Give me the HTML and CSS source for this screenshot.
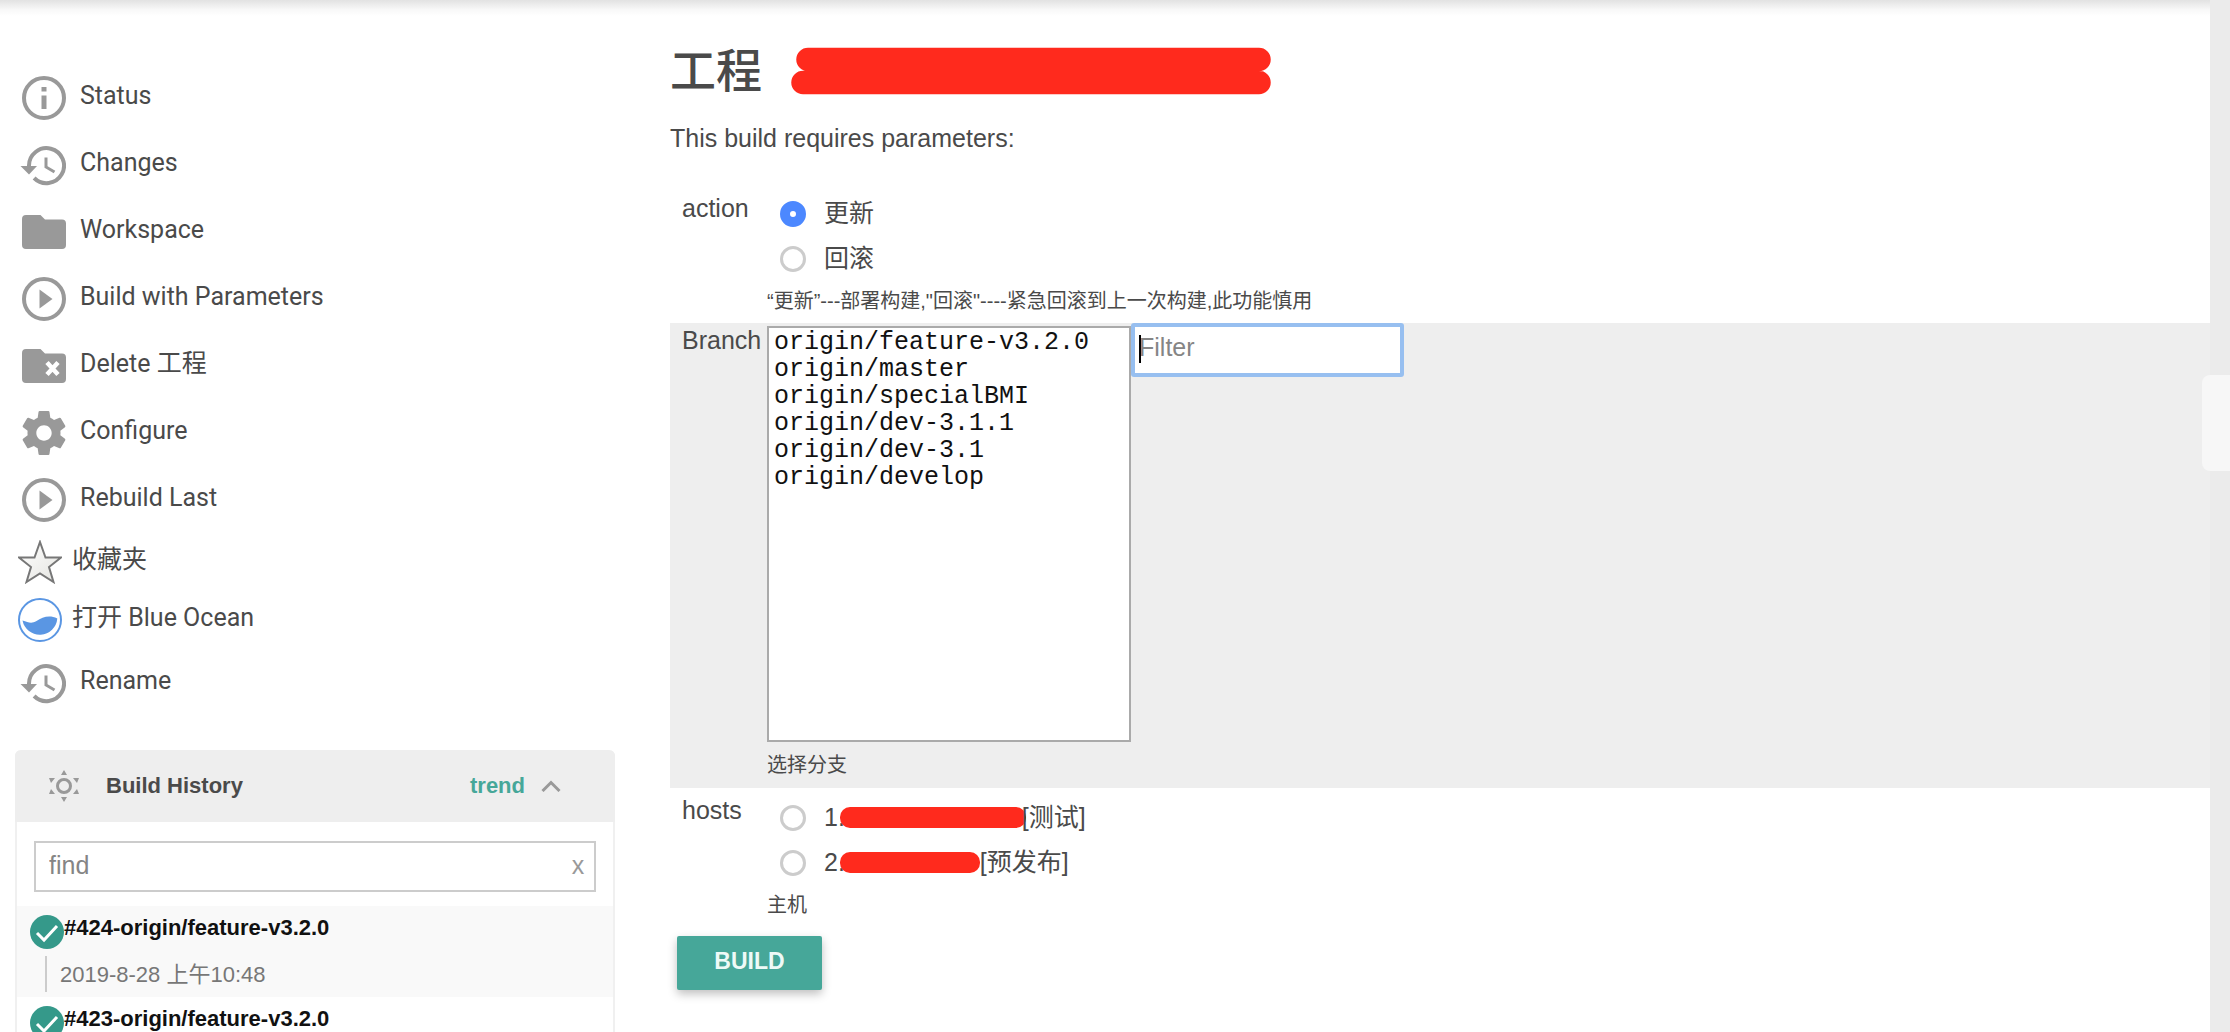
FILE: index.html
```html
<!DOCTYPE html>
<html lang="zh-CN">
<head>
<meta charset="utf-8">
<title>工程</title>
<link rel="stylesheet" href="styles.css">
</head>
<body>
<svg class="sprite" aria-hidden="true">
  <symbol id="i-info" viewBox="0 0 44 44"><circle cx="22" cy="22" r="20" fill="none" stroke="currentColor" stroke-width="4"/><path d="M19.500 11h5v4.500h-5zM19.500 19.500h5V33h-5z" fill="currentColor"/></symbol>
  <symbol id="i-history" viewBox="-2 0 46 44"><path d="M7 23A17.500 17.500 0 1 1 12.100 35" fill="none" stroke="currentColor" stroke-width="4"/><path d="M-1.500 23H15L7 31.500z" fill="currentColor"/><path d="M24 14.500V24l8.500 5" fill="none" stroke="currentColor" stroke-width="3"/></symbol>
  <symbol id="i-folder" viewBox="0 0 44 44"><path d="M4 5h14.500l4.500 4.500H40a4 4 0 0 1 4 4V35a4 4 0 0 1-4 4H4a4 4 0 0 1-4-4V9a4 4 0 0 1 4-4z" fill="currentColor"/></symbol>
  <symbol id="i-play" viewBox="0 0 44 44"><circle cx="22" cy="22" r="20" fill="none" stroke="currentColor" stroke-width="4"/><path d="M17.500 12.500L30.500 22 17.500 31.500z" fill="currentColor"/></symbol>
  <symbol id="i-gear" viewBox="2 2 20 20"><path fill="currentColor" d="M19.430 12.980c.04-.32.07-.64.07-.98s-.03-.66-.07-.98l2.110-1.650c.19-.15.24-.42.12-.64l-2-3.460c-.12-.22-.39-.3-.61-.22l-2.490 1c-.52-.4-1.080-.73-1.690-.98l-.38-2.650C14.460 2.180 14.250 2 14 2h-4c-.25 0-.46.18-.49.42l-.38 2.650c-.61.25-1.170.59-1.690.98l-2.490-1c-.23-.09-.49 0-.61.22l-2 3.460c-.13.22-.07.49.12.64l2.110 1.650c-.04.32-.07.65-.07.98s.03.66.07.98l-2.110 1.650c-.19.15-.24.42-.12.64l2 3.460c.12.22.39.3.61.22l2.490-1c.52.4 1.080.73 1.690.98l.38 2.650c.03.24.24.42.49.42h4c.25 0 .46-.18.49-.42l.38-2.650c.61-.25 1.170-.59 1.690-.98l2.490 1c.23.09.49 0 .61-.22l2-3.460c.12-.22.07-.49-.12-.64l-2.110-1.650zM12 15.500c-1.930 0-3.500-1.570-3.500-3.500s1.570-3.500 3.500-3.500 3.500 1.570 3.500 3.500-1.570 3.500-3.500 3.500z"/></symbol>
</svg>

<div class="shell">
  <aside class="side">
    <nav class="tasks">
      <a class="task" href="#"><svg class="icon"><use href="#i-info"/></svg><span>Status</span></a>
      <a class="task wide" href="#"><svg class="icon"><use href="#i-history"/></svg><span>Changes</span></a>
      <a class="task" href="#"><svg class="icon"><use href="#i-folder"/></svg><span>Workspace</span></a>
      <a class="task" href="#"><svg class="icon"><use href="#i-play"/></svg><span>Build with Parameters</span></a>
      <a class="task" href="#"><svg class="icon" viewBox="0 0 44 44"><use href="#i-folder" width="44" height="44"/><path d="M25 18.500l11 12M36 18.500l-11 12" stroke="#fff" stroke-width="4.500"/></svg><span>Delete 工程</span></a>
      <a class="task" href="#"><svg class="icon"><use href="#i-gear"/></svg><span>Configure</span></a>
      <a class="task" href="#"><svg class="icon"><use href="#i-play"/></svg><span>Rebuild Last</span></a>
      <a class="task small" href="#"><svg class="icon" viewBox="0 0 44 44"><defs><linearGradient id="star" x2="1" y2="1"><stop offset="0" stop-color="#fff"/><stop offset="1" stop-color="#e4e4e0"/></linearGradient></defs><path d="M22 2l5.500 15.500H43L31 27l4.500 15L22 33.500 8.500 42 13 27 1 17.500h15.500z" fill="url(#star)" stroke="#777" stroke-width="2"/></svg><span>收藏夹</span></a>
      <a class="task small" href="#"><svg class="icon" viewBox="0 0 44 44"><circle cx="22" cy="22" r="21" fill="#fff" stroke="#5a96e3" stroke-width="2"/><path d="M4.500 22.500c6 2 9 3.500 14 .500 6-4 13-6.500 20.800-2.500A17.600 17.600 0 0 1 4.500 22.500z" fill="#5a96e3"/></svg><span>打开 Blue Ocean</span></a>
      <a class="task wide" href="#"><svg class="icon"><use href="#i-history"/></svg><span>Rename</span></a>
    </nav>

    <section class="history">
      <header class="history-head">
        <svg class="sun" viewBox="0 0 30 32"><circle cx="15" cy="16" r="6.500" fill="none" stroke="#999" stroke-width="3"/><path d="M15 0l3 5h-6zM15 32l3-5h-6zM0 8h6l-4 5zM30 8h-6l4 5zM0 24h6l-4-5zM30 24h-6l4-5z" fill="#999"/></svg>
        <h2>Build History</h2>
        <a class="trend" href="#">trend</a>
        <svg class="chevron" viewBox="0 0 20 12"><path d="M1.500 11L10 2.500 18.500 11" fill="none" stroke="#999" stroke-width="3"/></svg>
      </header>
      <div class="find">
        <input type="text" placeholder="find" aria-label="find">
        <button type="button">x</button>
      </div>
      <article class="run shaded">
        <svg class="ball" viewBox="0 0 34 34"><circle cx="17" cy="17" r="17" fill="#35998a"/><path d="M7 18l7 7L27 11" fill="none" stroke="#fff" stroke-width="3"/></svg>
        <a href="#">#424-origin/feature-v3.2.0</a>
        <time>2019-8-28 上午10:48</time>
      </article>
      <article class="run">
        <svg class="ball" viewBox="0 0 34 34"><circle cx="17" cy="17" r="17" fill="#35998a"/><path d="M7 18l7 7L27 11" fill="none" stroke="#fff" stroke-width="3"/></svg>
        <a href="#">#423-origin/feature-v3.2.0</a>
      </article>
    </section>
  </aside>

  <main class="main">
    <h1>工程
      <svg class="scribble" viewBox="0 0 480 46"><path d="M17 11.500H468M12 34.500H468" stroke="#ff2a1d" stroke-width="23.500" stroke-linecap="round"/></svg>
    </h1>
    <p class="intro">This build requires parameters:</p>
    <form>
      <div class="param action" role="radiogroup" aria-labelledby="l-action">
        <span class="name" id="l-action">action</span>
        <div class="field">
          <label class="choice"><input type="radio" name="action" checked><span>更新</span></label>
          <label class="choice"><input type="radio" name="action"><span>回滚</span></label>
          <p class="note">“更新”---部署构建,"回滚"----紧急回滚到上一次构建,此功能慎用</p>
        </div>
      </div>
      <div class="param branch">
        <label class="name" for="branch">Branch</label>
        <div class="field">
          <div class="pick">
            <select id="branch" size="15">
              <option>origin/feature-v3.2.0</option>
              <option>origin/master</option>
              <option>origin/specialBMI</option>
              <option>origin/dev-3.1.1</option>
              <option>origin/dev-3.1</option>
              <option>origin/develop</option>
            </select>
            <div class="filter"><input type="text" placeholder="Filter" aria-label="Filter"><i class="caret"></i></div>
          </div>
          <p class="note">选择分支</p>
        </div>
      </div>
      <div class="param hosts" role="radiogroup" aria-labelledby="l-hosts">
        <span class="name" id="l-hosts">hosts</span>
        <div class="field">
          <label class="choice"><input type="radio" name="host"><span>1.</span><i class="mask long"></i><span>[测试]</span></label>
          <label class="choice"><input type="radio" name="host"><span>2.</span><i class="mask"></i><span>[预发布]</span></label>
          <p class="note">主机</p>
        </div>
      </div>
      <button class="build" type="button">BUILD</button>
    </form>
  </main>

  <div class="rail"><div class="handle"></div></div>
</div>
</body>
</html>
```

FILE: styles.css
```css
* { box-sizing: border-box; }

body {
  margin: 0;
  background: #fff;
  color: #4a4a4a;
  font: 25px/30px "Liberation Sans", "Noto Sans CJK SC", sans-serif;
}

h1, h2, p { margin: 0; }
a { color: inherit; text-decoration: none; }
input, select, button { font: inherit; color: inherit; margin: 0; border-radius: 0; }
.sprite { position: absolute; width: 0; height: 0; }

.shell {
  position: relative;
  display: flex;
  height: 100vh;
  overflow: hidden;
}
/* Shadow cast by the page header */
.shell::before {
  content: "";
  position: absolute;
  inset: 0 0 auto;
  height: 16px;
  background: linear-gradient(#e2e2e2, #f8f8f8 60%, #fff);
}

/* Sidebar */
.side { flex: none; width: 615px; padding: 64px 0 0 15px; }

.task {
  display: flex;
  align-items: center;
  gap: 14px;
  height: 67px;
  padding-left: 7px;
  font-family: Roboto, "Noto Sans CJK SC", sans-serif;
}
.task span { padding-bottom: 4px; }
.task.small { height: 58px; padding-left: 3px; gap: 10px; }
.icon { flex: none; width: 44px; height: 44px; color: #999; }
.task.wide { padding-left: 5px; }
.task.wide .icon { width: 46px; }

.history {
  margin-top: 34px;
  border: 2px solid #f0f0f0;
  border-top: 0;
  border-radius: 6px 6px 0 0;
  font-size: 22px;
}
.history-head {
  display: flex;
  align-items: center;
  height: 72px;
  margin: 0 -2px;
  padding: 0 54px 0 34px;
  background: #eee;
  border-radius: 6px 6px 0 0;
}
.history-head h2 { flex: 1; margin-left: 27px; font-size: 22px; }
.sun { width: 30px; height: 32px; }
.trend { color: #46a799; font-weight: bold; }
.chevron { width: 20px; height: 12px; margin-left: 16px; }

.find {
  display: flex;
  margin: 19px 17px 14px;
  height: 51px;
  border: 2px solid #ccc;
}
.find input {
  flex: 1;
  min-width: 0;
  padding: 0 0 4px 13px;
  border: 0;
  background: none;
  font-size: 25px;
}
::placeholder { color: #858585; opacity: 1; }
.find button {
  width: 32px;
  padding: 0 0 4px;
  border: 0;
  background: none;
  color: #999;
  font-size: 25px;
}

.run {
  display: grid;
  grid-template-columns: 34px 1fr;
  grid-template-rows: 46px 45px;
  padding-left: 13px;
  height: 91px;
}
.run.shaded { background: #f9f9f9; }
.run a { padding-top: 7px; color: #111; font-weight: bold; }
.ball { width: 34px; height: 34px; margin-top: 9px; }
.run time {
  grid-column: 1 / 3;
  height: 36px;
  margin: 4px 0 0 15px;
  padding: 4px 0 0 13px;
  border-left: 2px solid #ccc;
  color: #777;
}

/* Parameter form */
.main { flex: 1; min-width: 0; padding: 41px 0 0 55px; }

h1 {
  display: flex;
  align-items: center;
  gap: 29px;
  height: 60px;
  font-size: 46px;
  font-weight: 500;
}
.scribble { width: 480px; height: 46px; overflow: visible; }
.intro { margin-top: 22px; }

.param { display: flex; padding-left: 12px; }
.param .name { flex: none; width: 85px; }
.field { flex: 1; min-width: 0; }
.action { margin-top: 38px; height: 132px; }
.action .name { padding-top: 2px; }
.choice {
  display: flex;
  align-items: center;
  height: 45px;
  padding-left: 13px;
}
.choice input {
  appearance: none;
  width: 26px;
  height: 26px;
  margin-right: 18px;
  border: 3px solid #ccc;
  border-radius: 50%;
  background: #fff;
}
.choice input:checked { border: 10px solid #4c88ff; }
.choice span { padding-bottom: 2px; }
.note { font-size: 20px; padding-top: 5px; }

.branch { height: 465px; background: #eee; }
.branch .name { padding-top: 2px; }
.pick { display: flex; align-items: flex-start; margin-bottom: 3px; }
.pick select {
  width: 364px;
  height: 416px;
  margin-top: 3px;
  padding: 0 3px;
  border: 2px solid #aaa;
  background: #fff;
  color: #111;
  font: 25px/27px "Liberation Mono", monospace;
  overflow: hidden;
}
.pick option { padding: 0 2px; height: 27px; min-height: 27px; line-height: 27px; }
.filter { position: relative; }
.filter input {
  width: 273px;
  height: 54px;
  padding: 0 4px 6px;
  border: 4px solid #97bff0;
  border-radius: 3px;
  background: #fff;
}
.caret {
  position: absolute;
  left: 8px;
  top: 12px;
  width: 2px;
  height: 28px;
  background: #000;
}

.hosts { padding-top: 7px; height: 148px; }
.mask {
  width: 140px;
  height: 21px;
  border-radius: 10px;
  background: #ff2a1d;
  margin-left: -5px;
}
.mask.long { width: 186px; margin-right: -4px; }

.build {
  width: 145px;
  height: 54px;
  margin-left: 7px;
  padding: 0 0 4px;
  border: 0;
  border-radius: 2px;
  background: #46a799;
  box-shadow: 0 4px 10px rgba(0, 0, 0, .25);
  color: #eefaf7;
  font-size: 23px;
  font-weight: bold;
}

/* Collapsed drawer at the window edge */
.rail { position: relative; flex: none; width: 20px; background: #ebebeb; }
.handle {
  position: absolute;
  top: 375px;
  right: 0;
  width: 28px;
  height: 96px;
  border-radius: 8px 0 0 8px;
  background: #f7f7f7;
}
```
